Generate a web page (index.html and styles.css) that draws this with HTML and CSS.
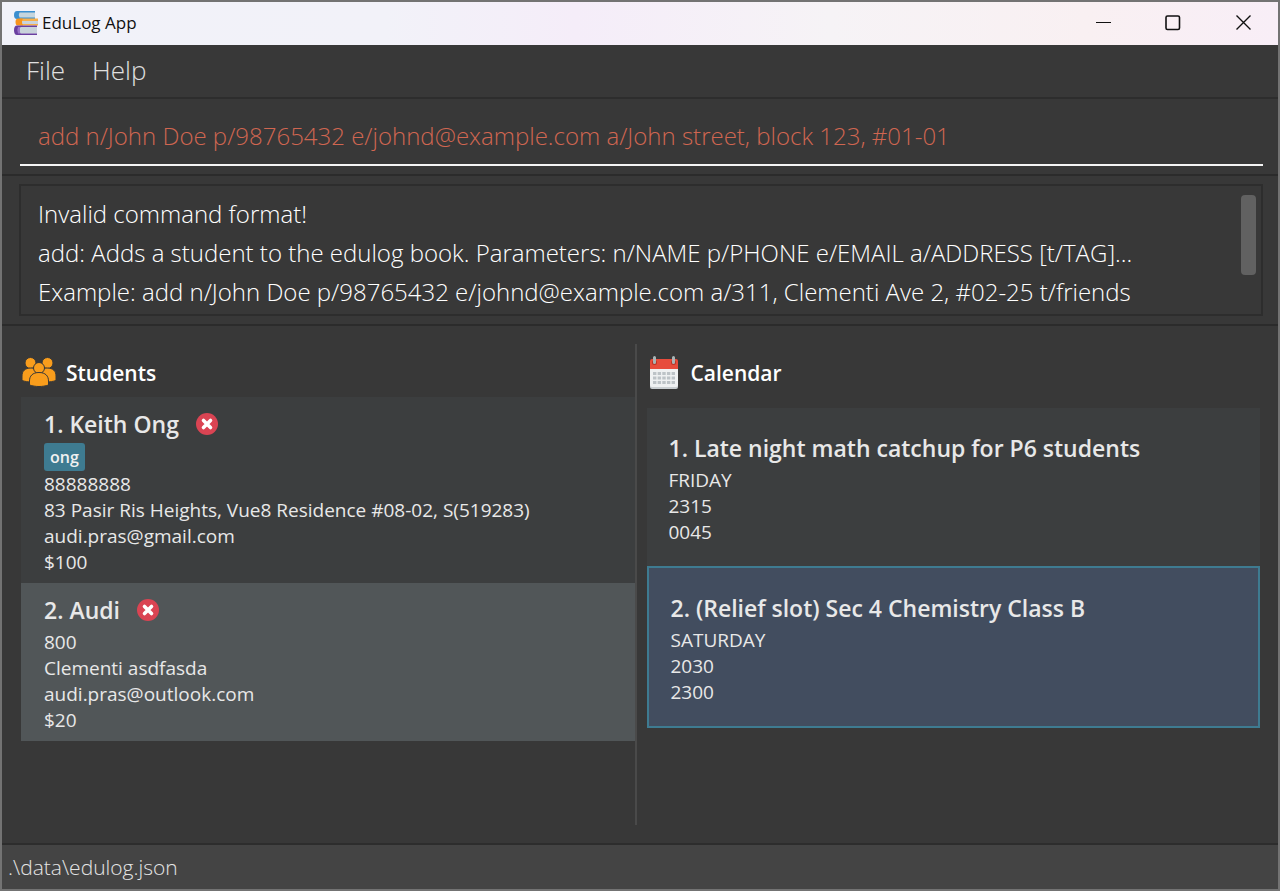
FILE: index.html
```html
<!DOCTYPE html>
<html lang="en">
<head>
<meta charset="utf-8">
<meta name="viewport" content="width=device-width, initial-scale=1">
<title>EduLog App</title>
<link rel="stylesheet" href="styles.css">
</head>
<body>
<div class="window">
  <header class="titlebar">
    <svg class="app-icon" viewBox="0 0 24 24" aria-hidden="true">
      <path fill="#c5d5dd" d="M3 1h18v6H3z"/>
      <path fill="#3b8fd0" d="M3 0h18v1.500H5.500q-1.500 2.500 0 5H21V8H3Q0 8 0 4t3-4z"/>
      <path fill="#c9d3dc" d="M7 9h17v5H7z"/>
      <path fill="#f8b04a" d="M6 7.500h18V10H6zM6 13h18v1.500H6z"/>
      <path fill="#f7941d" d="M4 7.500h5q-2 3.500 0 7H4Q1.500 14.500 1.500 11T4 7.500z"/>
      <path fill="#c8d3da" d="M5 15.500h18v7H5z"/>
      <path fill="#6a3fa0" d="M3 14.500h20V16H6.500q-2 3 0 6.500H23V24H3q-3 0-3-4.750t3-4.750z"/>
      <path fill="#9a76c8" d="M4 16h2v6.500H4q-1.500-3 0-6.500z"/>
    </svg>
    <h1 class="app-title">EduLog App</h1>
    <div class="window-buttons">
      <button class="window-button" type="button" aria-label="Minimize">
        <svg viewBox="0 0 16 16" aria-hidden="true"><path d="M1 7.500h15"/></svg>
      </button>
      <button class="window-button" type="button" aria-label="Maximize">
        <svg class="thick" viewBox="0 0 16 16" aria-hidden="true"><rect x="1" y="1" width="13.500" height="13.500" rx="1.500"/></svg>
      </button>
      <button class="window-button" type="button" aria-label="Close">
        <svg class="medium" viewBox="0 0 16 16" aria-hidden="true"><path d="M1.500.5l14 14M15.500.5l-14 14"/></svg>
      </button>
    </div>
  </header>

  <nav class="menubar" aria-label="Main menu">
    <button class="menu" type="button">File</button>
    <button class="menu" type="button">Help</button>
  </nav>

  <section class="command-pane">
    <input class="command" type="text" aria-label="Command" spellcheck="false" value="add n/John Doe p/98765432 e/johnd@example.com a/John street, block 123, #01-01">
  </section>

  <section class="result-pane">
    <div class="result">
      <textarea class="result-text" aria-label="Result" rows="3" readonly wrap="off" spellcheck="false">Invalid command format!
add: Adds a student to the edulog book. Parameters: n/NAME p/PHONE e/EMAIL a/ADDRESS [t/TAG]...
Example: add n/John Doe p/98765432 e/johnd@example.com a/311, Clementi Ave 2, #02-25 t/friends</textarea>
      <div class="scroll-thumb"></div>
    </div>
  </section>

  <main class="lists">
    <section class="students">
      <div class="list-header">
        <svg class="header-icon" viewBox="0 0 36 34" aria-hidden="true">
          <g fill="#f99d1c" stroke="#383838" stroke-width="1">
            <circle cx="9.500" cy="7" r="5.500"/><circle cx="26.500" cy="7" r="5.500"/>
            <path d="M1 24.500V20c0-5 3-8 9-8s9 3 9 8v4.500c-5 2-12 2-18 0z"/>
            <path d="M17 24.500V20c0-5 3-8 9-8s9 3 9 8v4.500c-6 2-13 2-18 0z"/>
            <circle cx="18" cy="12" r="5.500"/>
            <path d="M8.500 29V25c0-5 3-8.500 9.500-8.500s9.500 3.500 9.500 8.500v4c-6 2-13 2-19 0z"/>
          </g>
        </svg>
        <h2 class="list-title">Students</h2>
      </div>
      <article class="card">
        <div class="card-head">
          <h3 class="card-title">1. Keith Ong</h3>
          <svg class="status" viewBox="0 0 22 22" role="img" aria-label="Unpaid"><circle cx="11" cy="11" r="11" fill="#da4453"/><path d="M7.500 7.500l7 7M14.500 7.500l-7 7" stroke="#fff" stroke-width="3.600" stroke-linecap="round"/></svg>
        </div>
        <span class="tag">ong</span>
        <p class="line">88888888</p>
        <p class="line">83 Pasir Ris Heights, Vue8 Residence #08-02, S(519283)</p>
        <p class="line">audi.pras@gmail.com</p>
        <p class="line">$100</p>
      </article>
      <article class="card card-even">
        <div class="card-head">
          <h3 class="card-title">2. Audi</h3>
          <svg class="status" viewBox="0 0 22 22" role="img" aria-label="Unpaid"><circle cx="11" cy="11" r="11" fill="#da4453"/><path d="M7.500 7.500l7 7M14.500 7.500l-7 7" stroke="#fff" stroke-width="3.600" stroke-linecap="round"/></svg>
        </div>
        <p class="line">800</p>
        <p class="line">Clementi asdfasda</p>
        <p class="line">audi.pras@outlook.com</p>
        <p class="line">$20</p>
      </article>
    </section>

    <section class="calendar">
      <div class="list-header">
        <svg class="header-icon calendar-icon" viewBox="0 0 28 34" aria-hidden="true">
          <rect y="5" width="28" height="28" rx="2" fill="#c9ced1"/>
          <rect y="5" width="28" height="26" rx="2" fill="#eff1f2"/>
          <path fill="#e74c3c" d="M2 3h24q2 0 2 2v8H0V5q0-2 2-2z"/>
          <circle cx="4.500" cy="6.500" r="2.500" fill="#b83427"/><circle cx="23.500" cy="6.500" r="2.500" fill="#b83427"/>
          <path d="M4.500 1.500v5M23.500 1.500v5" stroke="#a9b4b6" stroke-width="3" stroke-linecap="round"/>
          <path d="M3 17.500h22M3 22h22M3 26.500h22" stroke="#bdc3c7" stroke-width="3" stroke-dasharray="3.400 1.250"/>
        </svg>
        <h2 class="list-title">Calendar</h2>
      </div>
      <div class="events">
        <article class="card event">
          <h3 class="card-title">1. Late night math catchup for P6 students</h3>
          <p class="line">FRIDAY</p>
          <p class="line">2315</p>
          <p class="line">0045</p>
        </article>
        <article class="card event event-selected">
          <h3 class="card-title">2. (Relief slot) Sec 4 Chemistry Class B</h3>
          <p class="line">SATURDAY</p>
          <p class="line">2030</p>
          <p class="line">2300</p>
        </article>
      </div>
    </section>
  </main>

  <footer class="statusbar">.\data\edulog.json</footer>
</div>
</body>
</html>
```
FILE: styles.css
```css
* {
  box-sizing: border-box;
}

body,
h1,
h2,
h3,
p {
  margin: 0;
}

body {
  font-family: "Open Sans", "Noto Sans", sans-serif;
  color: #e8e8e8;
  background: #383838;
}

button,
input,
textarea {
  font: inherit;
  color: inherit;
  background: none;
  border: 0;
  padding: 0;
  margin: 0;
}

.window {
  display: flex;
  flex-direction: column;
  min-height: 100vh;
  border: 2px solid #737373;
}

.titlebar {
  display: flex;
  align-items: center;
  height: 43px;
  padding: 0 0 2px 12px;
  color: #111;
  background: linear-gradient(90deg, #f1f2f9 0%, #f2f2f9 30%, #f5edf9 45%, #f6f3f6 65%, #f9f0f2 85%, #f8eef7 100%);
}

.app-icon {
  width: 24px;
  height: 24px;
}

.app-title {
  margin-left: 4px;
  font-size: 17px;
  font-weight: 400;
}

.window-buttons {
  display: flex;
  margin-left: auto;
}

.window-button {
  display: grid;
  place-items: center;
  width: 70px;
  height: 41px;
}

.window-button svg {
  width: 16px;
  height: 16px;
  fill: none;
  stroke: #111;
  stroke-width: 1;
}

.window-button .medium {
  stroke-width: 1.4;
}

.window-button .thick {
  stroke-width: 1.6;
}

.menubar {
  display: flex;
  gap: 27px;
  height: 52px;
  padding: 0 0 2px 24px;
}

.menu {
  font-size: 26px;
  font-weight: 300;
  color: #e0e0e0;
}

.command-pane {
  padding: 11px 15px 8px 18px;
  border-top: 2px solid #2d2d2d;
}

.command {
  display: block;
  width: 100%;
  height: 56px;
  padding: 0 18px 4px;
  font-size: 24px;
  font-weight: 300;
  color: #d06651;
  border-bottom: 2px solid #f4f4f4;
}

.result-pane {
  padding: 8px 15px 8px 17px;
  border-top: 2px solid #2b2b2b;
}

.result {
  display: flex;
  height: 132px;
  padding: 8px 5px 4px 17px;
  border: 2px solid #2d2d2d;
}

.result-text {
  flex: 1;
  min-width: 0;
  height: 117px;
  font-size: 24px;
  font-weight: 300;
  line-height: 39px;
  color: #fff;
  resize: none;
  overflow: hidden;
}

.scroll-thumb {
  width: 15px;
  height: 80px;
  margin-top: 1px;
  border-radius: 4px;
  background: #616161;
}

.lists {
  display: grid;
  grid-template-columns: 616fr 640fr;
  flex: 1;
  padding: 18px 0 18px 19px;
  border-top: 2px solid #2b2b2b;
}

.students {
  border-right: 2px solid #4a4a4a;
}

.calendar {
  padding: 0 18px 0 10px;
}

.list-header {
  display: flex;
  align-items: center;
  gap: 9px;
  height: 53px;
  padding-top: 4px;
}

.header-icon {
  width: 36px;
  height: 34px;
}

.calendar-icon {
  width: 34px;
}

.list-title {
  font-size: 21px;
  font-weight: 600;
  color: #fff;
}

.card {
  padding: 8px 23px;
  background: #3c3e3f;
}

.card-even {
  background: #515658;
}

.card-head {
  display: flex;
  align-items: center;
  gap: 17px;
}

.card-title {
  font-size: 23px;
  font-weight: 600;
  line-height: 38px;
}

.status {
  width: 22px;
  height: 22px;
}

.tag {
  display: block;
  width: fit-content;
  padding: 0 6px;
  font-size: 16px;
  font-weight: 600;
  line-height: 28px;
  color: #f0f0f0;
  background: #3e7b91;
  border-radius: 3px;
}

.line {
  font-size: 19px;
  line-height: 26px;
}

.events {
  padding-top: 11px;
}

.event {
  padding: 21px;
}

.event-selected {
  background: #424d5f;
  border: 2px solid #3e7b91;
}

.statusbar {
  height: 46px;
  padding-left: 6px;
  font-size: 21px;
  font-weight: 300;
  line-height: 45px;
  color: #e4e4e4;
  background: #444;
  border-top: 2px solid #2d2d2d;
}
```
